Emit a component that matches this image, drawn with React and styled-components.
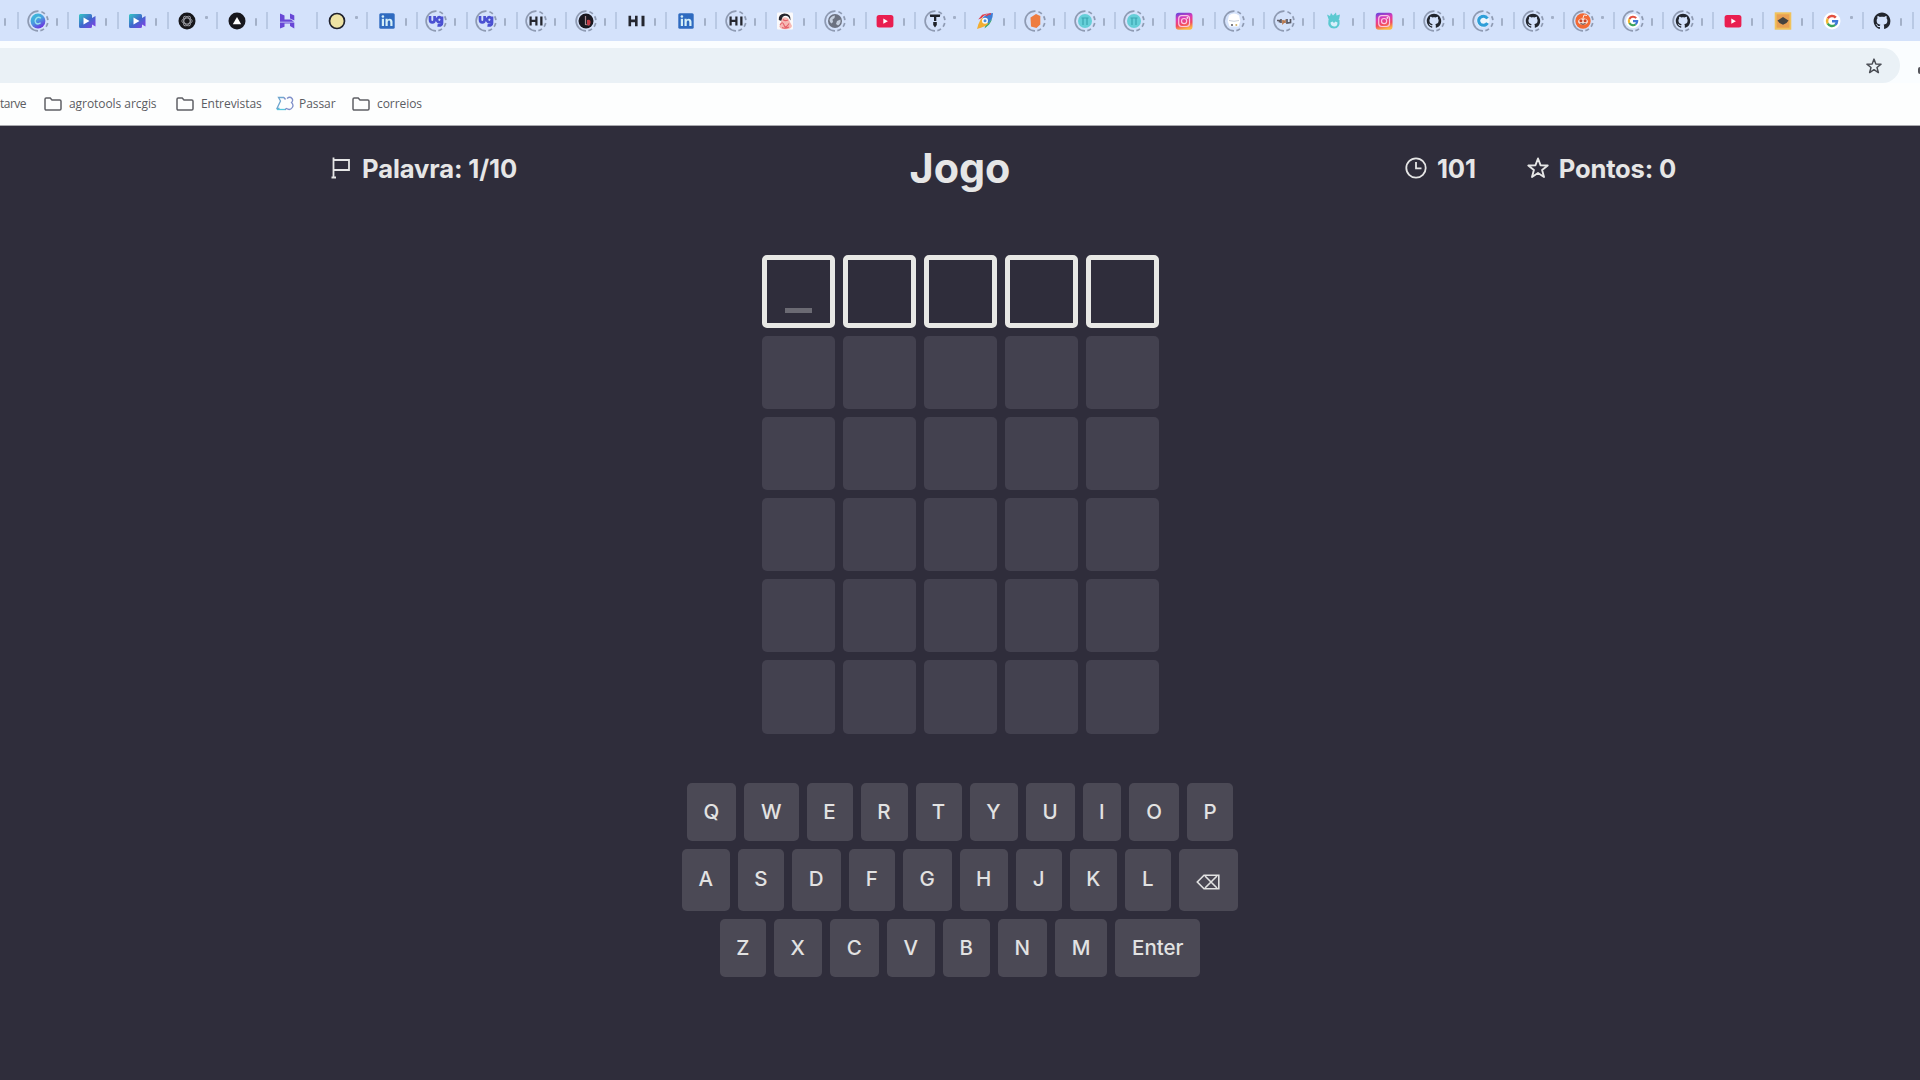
import React from "react";
import styled, { createGlobalStyle } from "styled-components";

const Global = createGlobalStyle`
  * { box-sizing: border-box; }
  body { margin: 0; background: #2f2d3b; overflow: hidden; }
`;

const Page = styled.div`
  width: 1920px;
  height: 1080px;
  overflow: hidden;
  display: flex;
  flex-direction: column;
  background: #2f2d3b;
  color: #e6e6e6;
  font-family: Inter, "Liberation Sans", sans-serif;
`;

/* ---------- browser chrome ---------- */

const TabStrip = styled.div`
  flex: none;
  height: 41px;
  padding-left: 17px;
  display: flex;
  align-items: center;
  background: #d4e2fb;
  overflow: hidden;
`;

const Tab = styled.div`
  flex: none;
  width: 49.86px;
  height: 17px;
  display: flex;
  align-items: center;
  border-left: 2px solid #b9c9e4;
  svg { flex: none; margin-left: 6.500px; }
`;

const TitleStub = styled.span`
  flex: none;
  width: ${(p) => (p.$dot ? 3 : 2)}px;
  height: ${(p) => (p.$dot ? 3 : 8)}px;
  margin-left: 6px;
  margin-top: ${(p) => (p.$dot ? -6 : 2)}px;
  border-radius: 1px;
  background: #a3b0c8;
`;

const Toolbar = styled.div`
  flex: none;
  height: 42px;
  padding: 7px 0 0;
  display: flex;
  justify-content: space-between;
  background: #fafdff;
  overflow: hidden;
`;

const Omnibox = styled.div`
  width: 1900px;
  height: 35px;
  padding-right: 18px;
  display: flex;
  align-items: center;
  justify-content: flex-end;
  border-radius: 0 18px 18px 0;
  background: #eaf1f6;
`;

const EdgeMark = styled.div`
  width: 2px;
  height: 7px;
  margin-top: 19px;
  border-radius: 2px 0 0 2px;
  background: #55565c;
`;

const Bookmarks = styled.div`
  flex: none;
  height: 43px;
  display: flex;
  align-items: center;
  padding-bottom: 1px;
  background: #fdfefe;
  border-bottom: 1px solid #a9a9ae;
  font: 12px/16px "Open Sans", "Noto Sans", sans-serif;
  color: #5b5c62;
`;

const Bookmark = styled.div`
  flex: none;
  width: ${(p) => p.$w}px;
  display: flex;
  align-items: center;
  gap: ${(p) => p.$gap ?? 7}px;
  white-space: nowrap;
  letter-spacing: ${(p) => p.$ls ?? -0.06}px;
  svg { flex: none; }
`;

const Ring = () => (
  <circle cx="15" cy="15" r="9.900" fill="none" stroke="#8f9bb3" strokeWidth="1.700" strokeDasharray="31.400 3 4 3 4 3 4 3 4 3.400" transform="rotate(90 15 15)" />
);

const favicons = {
  canva: (
    <g>
      <defs>
        <linearGradient id="canva" x1="0" y1="0" x2=".6" y2="1">
          <stop offset="0" stopColor="#35c5d6" /><stop offset=".55" stopColor="#4a9be0" /><stop offset="1" stopColor="#6a35e0" />
        </linearGradient>
      </defs>
      <circle cx="15" cy="15" r="7.4" fill="url(#canva)" />
      <path d="M17.8 12.300q-2-2-4.200-.3-2.400 2.500-.8 5 2 2 4.800-.2" fill="none" stroke="#9be6ee" strokeWidth="1.3" />
    </g>
  ),
  video: (
    <g>
      <defs>
        <linearGradient id="video" x1="0" y1="0" x2="1" y2="1">
          <stop offset="0" stopColor="#35c9c4" /><stop offset=".5" stopColor="#3d68cc" /><stop offset="1" stopColor="#8a3be8" />
        </linearGradient>
      </defs>
      <path d="M8.500 8h10q1.500 0 1.500 1.500v2.500l3.500-2v10.500l-3.500-2v2q0 1.500-1.500 1.500h-10Q7 22 7 20.500v-11Q7 8 8.500 8z" fill="url(#video)" />
      <path d="M11.500 11.500l6 3.500-6 3.500z" fill="#fff" />
    </g>
  ),
  gpt: (
    <g>
      <circle cx="15" cy="15" r="8.500" fill="#17171b" />
      <g fill="none" stroke="#9a9ba2" strokeWidth=".9">
        <ellipse cx="15" cy="15" rx="5.200" ry="3" />
        <ellipse cx="15" cy="15" rx="5.200" ry="3" transform="rotate(60 15 15)" />
        <ellipse cx="15" cy="15" rx="5.200" ry="3" transform="rotate(120 15 15)" />
      </g>
    </g>
  ),
  vercel: (<g><circle cx="15" cy="15" r="8.500" fill="#17171d" /><path d="M15 11l4.200 7.200h-8.400z" fill="#fff" /></g>),
  hostinger: (
    <g fill="#6847d6">
      <path d="M8 7.500l4.500 2v4h6.500l3 2.200H8z" />
      <path d="M18 7.500l4.300 2v5L18 12.500z" />
      <path d="M8 16.500h14.300v6L18 20v-2.500h-5.500v3.200L8 22.500z" />
    </g>
  ),
  yellow: (<circle cx="15" cy="15" r="7.500" fill="#eee3a4" stroke="#20222c" strokeWidth="1.700" />),
  linkedin: (
    <g>
      <rect x="7.300" y="7.300" width="15.400" height="15.400" rx="1.500" fill="#2f6bc0" />
      <g fill="#d5eff8"><circle cx="10.900" cy="10.500" r="1.300" /><rect x="9.800" y="12.800" width="2.200" height="7.200" /><path d="M13.500 12.800h2.100v1c1.200-1.800 4.900-1.600 4.900 2V20h-2.200v-3.800c0-2.300-2.600-2-2.600 0V20h-2.200z" /></g>
    </g>
  ),
  ug: (
    <g fill="none" stroke="#4a50d2" strokeWidth="2.700">
      <path d="M9 10v3.800q0 2.600 2.300 2.600t2.300-2.600V10M21 10.500v6.500q0 3-4.500 2.300M20.600 13.500a2.300 2.500 0 1 0 0 .5" />
    </g>
  ),
  hi: (<path d="M7.500 9.800h2.600v3.800h3.900V9.800h2.600v10.400H14v-3.900h-3.900v3.900H7.500zM20.500 9.800h3v10.400h-3z" fill="#24262f" />),
  hiSmall: (<path d="M8.500 10.500h2.200v3.300h3.600v-3.300h2.200v9h-2.200V16h-3.600v3.500H8.500zM19.200 10.500h2.300v9h-2.300z" fill="#24262f" />),
  league: (<g><circle cx="15" cy="15" r="7.500" fill="#1a1820" /><path d="M14.500 10v8.500l4 .5" stroke="#a98d93" strokeWidth="1.200" fill="none" /><path d="M16 14q4-1 3.500 3t-3.500 1.500z" fill="#c33a45" /></g>),
  face: (
    <g>
      <rect x="7" y="6.500" width="16" height="17" rx="1" fill="#fbfafb" />
      <path d="M8.800 14q-.6-6 5.500-6.600 6.800 0 6.300 7l-2-3.500q-3-2.200-6 0l-1 4z" fill="#24242c" />
      <path d="M12 12.500q3.500-2.500 6.500.5l3.500 7q-1 3.300-6.500 3.300-6 0-6-3z" fill="#f6b9b4" />
      <path d="M10 19q2.500-4.500 4 0t5-1.500M12 21.500q3 1.500 7-.5M13 13.500q2 2 5 .5" stroke="#e5616a" strokeWidth="1.100" fill="none" />
    </g>
  ),
  globe: (
    <g><circle cx="15" cy="15" r="7" fill="#6c7280" /><path d="M9.500 14q1-4 5.500-4.500l-.5 2.500-2 1.500.5 2.500-1.500 1.500q-2-1-2-3.500zM17 15l3.500-1.500q.7 4-2.500 6l-2-1.500z" fill="#c4cedd" /></g>
  ),
  youtube: (<g><rect x="6.600" y="9" width="16.800" height="12.400" rx="2.500" fill="#e91e50" /><path d="M13.300 12.600l4.600 2.600-4.600 2.600z" fill="#fff" /></g>),
  tee: (<g fill="#20232a"><path d="M9.700 8.500h10.600l-.5 2.600H10.200z" /><path d="M14 11.100h2.300v3.900H14zM13.200 16h3.600v3l-1.800 2.500-1.800-2.500z" /></g>),
  rocket: (
    <g>
      <path d="M23 7q-8 0-12 7.500l4.500 5Q23 15.500 23 7z" fill="#3e7ed6" />
      <path d="M21 7.300q-6 .4-9.500 5L8.200 13.500l4-4.700q4-1.600 8.800-1.500z" fill="#e33e4a" />
      <path d="M22 12q-2 5-6.500 7.500l-1 3 4.700-4q2.600-3 2.800-6.500z" fill="#34a566" />
      <path d="M10.500 13.800l2.200-2 5.500 6-2.700 2.200-4 1.500-4.500 1.500 1.300-4.500z" fill="#f2ae32" />
      <circle cx="15" cy="14.800" r="3" fill="#f7fafc" />
      <circle cx="15" cy="14.800" r="1.500" fill="#4a8fdd" />
      <path d="M16 10q2.500-2 5-2.200" stroke="#e33e4a" strokeWidth="1.500" fill="none" />
    </g>
  ),
  orange: (<path d="M10.500 11.500l5.500-3.500 4.300 2v8.500L16.500 22l-5.500-1.500z" fill="#ee7c3f" />),
  teal: (<g><circle cx="15" cy="15" r="7" fill="#66cfd8" /><path d="M11.500 12h7M13 12v7M17 12v7" stroke="#3ba6b1" strokeWidth="1.200" fill="none" /></g>),
  instagram: (
    <g>
      <defs>
        <linearGradient id="insta" x1=".2" y1="0" x2=".45" y2="1">
          <stop offset="0" stopColor="#6a45dc" /><stop offset=".35" stopColor="#dc3bb6" /><stop offset=".7" stopColor="#f2485f" /><stop offset="1" stopColor="#fbb845" />
        </linearGradient>
      </defs>
      <rect x="6.700" y="6.700" width="16.800" height="17" rx="3" fill="url(#insta)" />
      <g fill="none" stroke="#fbc6e4" strokeWidth="1.200"><rect x="9.700" y="9.700" width="10.800" height="10.800" rx="3" /><circle cx="15.100" cy="15.100" r="2.600" /></g>
      <circle cx="18.300" cy="11.900" r=".8" fill="#fff" />
    </g>
  ),
  bot: (<g><path d="M10 9.500q5-4 10 0l1.300 5.500-1.800 5.500h-9L8.700 15z" fill="#fff" /><path d="M10 14.500q5 1.500 10 0" stroke="#c8cfdb" fill="none" /><circle cx="13" cy="19" r="1.100" fill="#5e6068" /><circle cx="17.300" cy="19" r="1" fill="#cfaf66" /></g>),
  word: (<g fill="none" strokeWidth="1.700"><path d="M8 14.500h2.500v2M12 13v4" stroke="#5e5a63" /><path d="M14 14v3l2-2v2" stroke="#b8794f" /><path d="M18 13v4l3.500-.5V13" stroke="#575863" /></g>),
  cactus: (
    <g fill="#5cc9d1"><path d="M8 8.500l3 1.500 1-3 2 2.500 3-3 .5 3 3.500-1-1 5-1.500 1H10z" /><path d="M9.500 14q-1.500 8.500 5.500 8.500 6.500 0 5.500-8.500z" /><path d="M11.500 16.500q0 3.500 3.500 4t3.500-4l-2-1-1.500 1.500-1.500-1.500z" fill="#d9effb" /></g>
  ),
  github: (
    <path transform="translate(6.600 6.600) scale(1.050)" d="M8 0C3.580 0 0 3.580 0 8c0 3.540 2.290 6.530 5.470 7.590.4.070.55-.17.55-.38 0-.19-.01-.82-.01-1.490-2.010.37-2.530-.49-2.690-.94-.09-.23-.48-.94-.82-1.130-.28-.15-.68-.52-.01-.53.63-.01 1.080.58 1.230.82.72 1.210 1.870.87 2.330.66.07-.52.28-.87.51-1.070-1.780-.2-3.640-.89-3.640-3.950 0-.87.31-1.590.82-2.150-.08-.2-.36-1.020.08-2.120 0 0 .67-.21 2.200.82.64-.18 1.320-.27 2-.27s1.360.09 2 .27c1.530-1.040 2.200-.82 2.200-.82.44 1.100.16 1.920.08 2.120.51.56.82 1.270.82 2.150 0 3.070-1.870 3.750-3.650 3.950.29.25.54.73.54 1.480 0 1.070-.01 1.930-.01 2.200 0 .21.15.46.55.38A8.010 8.010 0 0 0 16 8c0-4.420-3.580-8-8-8z" fill="#22262e" />
  ),
  cblue: (<g><circle cx="15" cy="15" r="6.500" fill="#edf6fc" /><path d="M19.500 12.500q-2-3-5.500-2-4 1.500-3.200 5.200 1 3.600 4.700 3.600 2.800 0 4-2.300" fill="none" stroke="#2f9fd8" strokeWidth="3" /></g>),
  reddit: (
    <g><circle cx="15" cy="15" r="7.700" fill="#f26a35" /><ellipse cx="15" cy="15.500" rx="5" ry="3.300" fill="#f6dfd5" /><circle cx="12.900" cy="14.800" r="1.500" fill="#c94327" /><circle cx="17.100" cy="14.800" r="1.500" fill="#c94327" /><path d="M12.500 17.500q2.500 1.600 5 0" stroke="#5a3a35" fill="none" /><path d="M15 12l1-3 3 .5" stroke="#f6e9e3" fill="none" /></g>
  ),
  google: (
    <g>
      <circle cx="15" cy="15" r="8.500" fill="#fff" />
      <g fill="none" strokeWidth="2.500">
        <path d="M18.800 11.600A5 5 0 0 0 10.700 12.500" stroke="#e2503f" />
        <path d="M10.700 12.500a5 5 0 0 0 0 5" stroke="#efb52f" />
        <path d="M10.700 17.500a5 5 0 0 0 7.500 1.400" stroke="#3ba45c" />
        <path d="M18.200 18.900A5 5 0 0 0 20 15.200h-5" stroke="#3e78d8" />
      </g>
    </g>
  ),
  square: (<g><rect x="6.700" y="6.300" width="16.600" height="17.400" fill="#f0c25c" /><rect x="8.600" y="8.300" width="12.800" height="13.400" fill="#e9a052" /><path d="M15 11l5.500 3.500-2 2.500-3.500 1.800-3.500-1.800-2-2.500z" fill="#46433f" /></g>),
};

const small = { github: 0.86, google: 0.84 };

const tabs = [
  ["canva", 1], ["video"], ["video"], ["gpt", 0, 1], ["vercel"], ["hostinger", 0, 2], ["yellow", 0, 1], ["linkedin"],
  ["ug", 1], ["ug", 1], ["hiSmall", 1], ["league", 1], ["hi"], ["linkedin"], ["hiSmall", 1], ["face"], ["globe", 1],
  ["youtube"], ["tee", 1, 1], ["rocket"], ["orange", 1], ["teal", 1], ["teal", 1], ["instagram"], ["bot", 1], ["word", 1],
  ["cactus"], ["instagram"], ["github", 1], ["cblue", 1], ["github", 1, 1], ["reddit", 1, 1], ["google", 1], ["github", 1],
  ["youtube"], ["square"], ["google", 0, 1], ["github"], [null, 0, 2],
];

function Favicon({ name, ring }) {
  const s = ring && small[name] ? small[name] : 1;
  return (
    <svg width="24" height="24" viewBox="3 3 24 24">
      {name && <g transform={`translate(${15 * (1 - s)} ${15 * (1 - s)}) scale(${s})`}>{favicons[name]}</g>}
      {ring ? <Ring /> : null}
    </svg>
  );
}

const LeadStub = styled(TitleStub)`
  margin-left: -13px;
  margin-right: 11px;
`;

const Folder = () => (
  <svg width="18" height="14" viewBox="0 0 18 14">
    <path d="M1 2.200Q1 1 2.200 1h4l1.800 2h7.800Q17 3 17 4.200v7.600q0 1.200-1.200 1.200H2.200Q1 13 1 11.800z" fill="none" stroke="#5f6066" strokeWidth="1.500" />
  </svg>
);

const PassarIcon = () => (
  <svg width="18" height="15" viewBox="0 0 18 15" fill="none" strokeWidth="1.300">
    <path d="M8 1.500H2.500L4.500 5 1 12.500h2.500" stroke="#6fa6cf" />
    <path d="M1 13.500h9" stroke="#55c6dc" />
    <path d="M8 1.500l1.500 2M11 2.500q3-2.500 5 0 1.500 2-.5 4 2.500 2.500.8 5-2.300 3.300-5.800 1l-1.500 1" stroke="#7f8fc9" />
  </svg>
);

/* ---------- game ---------- */

const Header = styled.header`
  flex: none;
  height: 84px;
  padding: 0 244px 0 331px;
  display: flex;
  justify-content: space-between;
  align-items: center;
`;

const Stat = styled.div`
  display: flex;
  align-items: center;
  gap: ${(p) => p.$gap}px;
  padding-top: 1px;
  font-weight: 700;
  font-size: 25.600px;
  line-height: 32px;
  white-space: nowrap;
  letter-spacing: ${(p) => p.$ls ?? -0.2}px;
  svg { flex: none; margin-top: -2px; }
`;

const Side = styled.div`
  width: ${(p) => p.$w}px;
  display: flex;
  justify-content: ${(p) => (p.$end ? "space-between" : "flex-start")};
`;

const Title = styled.h1`
  margin: 0;
  width: 120px;
  text-align: center;
  font-weight: 700;
  font-size: 41.300px;
  line-height: 50px;
`;

const Board = styled.main`
  flex: none;
  margin-top: 45px;
  display: grid;
  grid-template-columns: repeat(5, 73px);
  grid-auto-rows: 73.100px;
  gap: 8px;
  justify-content: center;
`;

const Tile = styled.div`
  display: flex;
  justify-content: center;
  align-items: flex-end;
  padding-bottom: 10px;
  border-radius: 5px;
  border: ${(p) => (p.$active ? "5px solid #e8e8e5" : "none")};
  background: ${(p) => (p.$active ? "transparent" : "#43414f")};
`;

const Cursor = styled.div`
  width: 27px;
  height: 5px;
  background: #6b6a73;
`;

const Keyboard = styled.section`
  flex: none;
  margin-top: 49.400px;
  display: flex;
  flex-direction: column;
  align-items: center;
  gap: 8px;
`;

const KeyRow = styled.div`
  display: flex;
  gap: 8px;
  height: ${(p) => p.$h}px;
  button { padding-bottom: ${(p) => p.$lift ?? 0}px; }
`;

const Key = styled.button`
  width: ${(p) => p.$w}px;
  padding: 0;
  border: 0;
  border-radius: 5px;
  background: #4b4955;
  color: #e2e2e2;
  font: 500 20.500px/26px Inter, "DejaVu Sans", sans-serif;
  display: flex;
  align-items: center;
  justify-content: center;
`;

const rows = [
  { h: 58.5, keys: [["Q", 49], ["W", 54.500], ["E", 46], ["R", 47], ["T", 46], ["Y", 48], ["U", 49], ["I", 38.500], ["O", 50], ["P", 46]] },
  { h: 61.5, lift: 3, keys: [["A", 48], ["S", 46], ["D", 49], ["F", 46], ["G", 49], ["H", 48], ["J", 46], ["K", 47], ["L", 46], ["⌫", 59.500]] },
  { h: 58.5, lift: 1, keys: [["Z", 46], ["X", 48], ["C", 49], ["V", 48], ["B", 47], ["N", 49], ["M", 52.500], ["Enter", 85]] },
];

const EraseIcon = styled.svg`
  margin-top: 6px;
  margin-right: 1px;
`;

const FlagIcon = () => (
  <svg width="20" height="22" viewBox="0 0 20 22" fill="none" stroke="#e6e6e6" strokeWidth="1.800">
    <path d="M2.500 .5V21M.5 20.500H5M2.500 3H18v10H2.500" />
  </svg>
);

const ClockIcon = () => (
  <svg width="22" height="22" viewBox="0 0 22 22" fill="none" stroke="#e6e6e6" strokeWidth="1.800">
    <circle cx="11" cy="11" r="9.700" /><path d="M11 5v6.300h5.500" />
  </svg>
);

const Star = ({ size, color, width }) => (
  <svg width={size} height={size} viewBox="0 0 22 22" fill="none" stroke={color} strokeWidth={width} strokeLinejoin="round">
    <path d="M11 1.500l2.500 6.700 7.200.3-5.600 4.500 1.900 7L11 16l-6 4 1.900-7L1.300 8.500l7.200-.3z" />
  </svg>
);

export default function App() {
  return (
    <Page>
      <Global />
      <TabStrip>
        <LeadStub />
        {tabs.map(([name, ring, stub], i) => (
          <Tab key={i}>
            <Favicon name={name} ring={ring} />
            {stub !== 2 && <TitleStub $dot={stub === 1} />}
          </Tab>
        ))}
      </TabStrip>
      <Toolbar>
        <Omnibox><Star size={16} color="#4a4d54" width={2} /></Omnibox>
        <EdgeMark />
      </Toolbar>
      <Bookmarks>
        <Bookmark $w={44} $ls={-0.5}>tarve</Bookmark>
        <Bookmark $w={132}><Folder />agrotools arcgis</Bookmark>
        <Bookmark $w={100}><Folder />Entrevistas</Bookmark>
        <Bookmark $w={76} $gap={5}><PassarIcon />Passar</Bookmark>
        <Bookmark $w={100}><Folder />correios</Bookmark>
      </Bookmarks>

      <Header>
        <Side $w={184}>
          <Stat $gap={11} $ls={-0.12}><FlagIcon />Palavra: 1/10</Stat>
        </Side>
        <Title>Jogo</Title>
        <Side $w={271} $end>
          <Stat $gap={10}><ClockIcon />101</Stat>
          <Stat $gap={10}><Star size={22} color="#e6e6e6" width={1.9} />Pontos: 0</Stat>
        </Side>
      </Header>

      <Board>
        {Array.from({ length: 30 }, (_, i) => (
          <Tile key={i} $active={i < 5}>{i === 0 && <Cursor />}</Tile>
        ))}
      </Board>

      <Keyboard>
        {rows.map((row, r) => (
          <KeyRow key={r} $h={row.h} $lift={row.lift}>
            {row.keys.map(([label, w]) => (
              <Key key={label} $w={w} aria-label={label}>
                {label === "⌫" ? (
                  <EraseIcon width="24" height="16" viewBox="0 0 24 16" fill="none" stroke="#e2e2e2" strokeWidth="1.600">
                    <path d="M8 1.200h14.800v13.600H8L1.300 8zM9 2l12 12M21 2L9 14" />
                  </EraseIcon>
                ) : label}
              </Key>
            ))}
          </KeyRow>
        ))}
      </Keyboard>
    </Page>
  );
}
